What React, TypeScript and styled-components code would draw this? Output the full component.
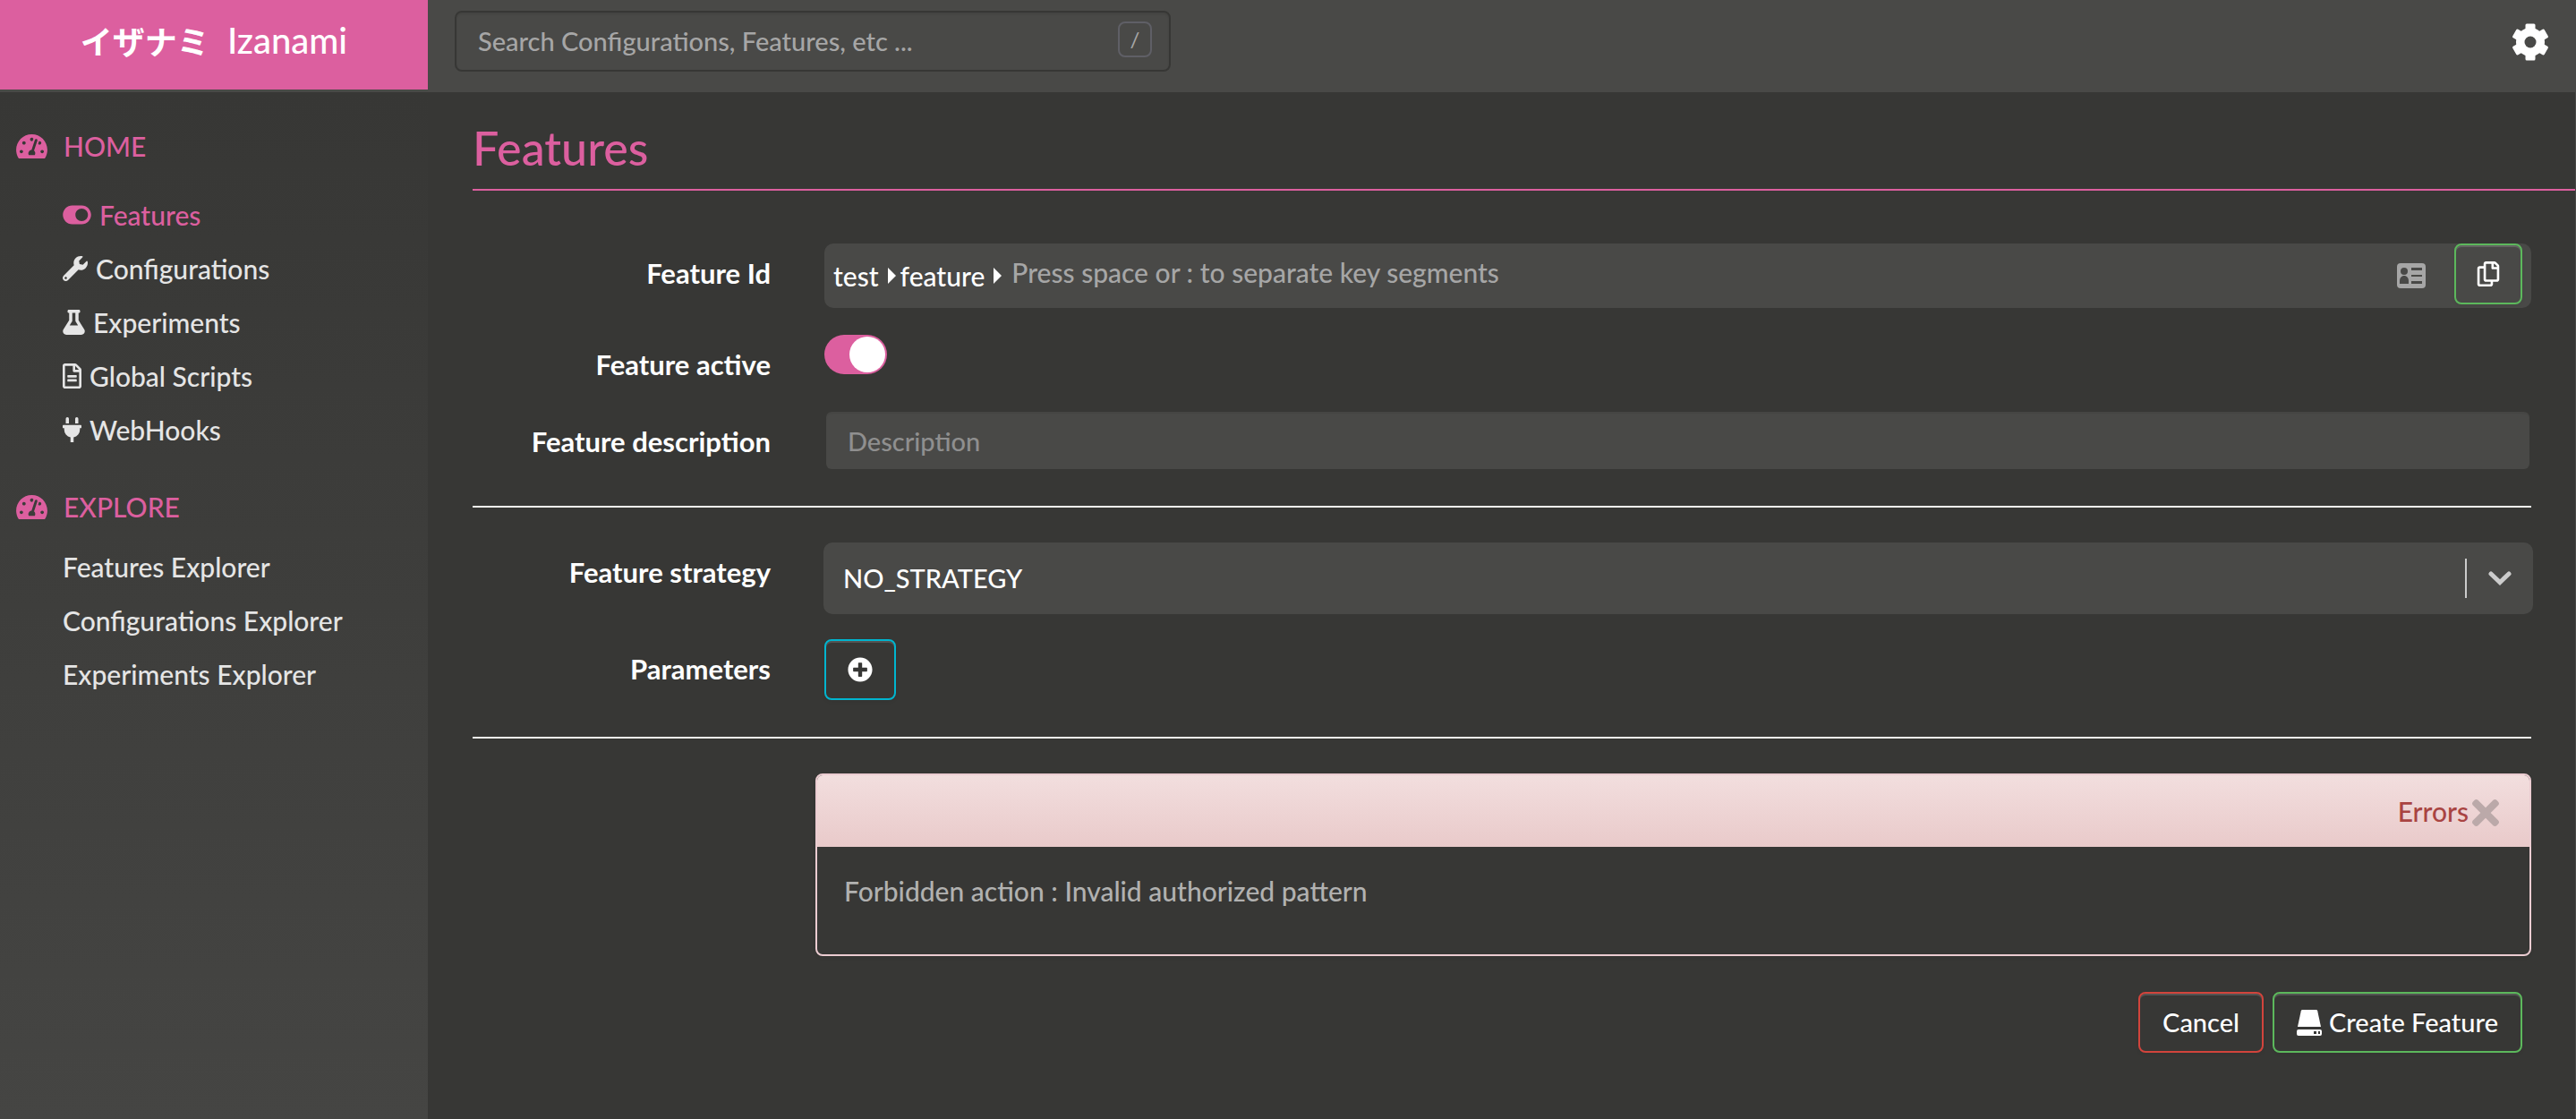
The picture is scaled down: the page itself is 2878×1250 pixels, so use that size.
import React from 'react';
import styled, { createGlobalStyle } from 'styled-components';
import {
  FaFlask,
  FaPlug,
  FaPlusCircle,
  FaRegCopy,
  FaRegFileAlt,
  FaTachometerAlt,
  FaTimes,
  FaToggleOn,
  FaWrench,
} from 'react-icons/fa';

const color = {
  page: '#373735',
  surface: '#494947',
  pink: '#dc5f9f',
  text: '#e5e5e5',
  muted: '#a6a6a6',
  faint: '#8f8f8f',
  green: '#5cb85c',
  red: '#d2443c',
  cyan: '#00b5cf',
  blush: '#ebccd1',
};

const GlobalStyle = createGlobalStyle`
  *, *::before, *::after { box-sizing: border-box; }
  html, body, #root { height: 100%; }
  body {
    margin: 0;
    background: ${color.page};
    color: #fff;
    font: 500 30px/40px Lato, "Noto Sans CJK JP", sans-serif;
  }
  button, input, select { font: inherit; color: inherit; }
  ul { list-style: none; margin: 0; padding: 0; }
`;

const Page = styled.div`
  display: grid;
  grid-template-columns: 478px minmax(0, 1fr);
  grid-template-rows: auto 1fr;
  min-height: 100%;
`;

const Header = styled.header`
  grid-column: 1 / -1;
  display: grid;
  grid-template-columns: subgrid;
  align-items: start;
  height: 103px;
  background: ${color.surface};
`;

const Brand = styled.a`
  display: flex;
  justify-content: center;
  gap: 20px;
  height: 100px;
  padding-top: 21px;
  background: ${color.pink};
  color: #fff;
  font-size: 40px;
  line-height: 48px;
  text-decoration: none;
`;

const Kana = styled.span`
  font-family: "Noto Sans CJK JP", sans-serif;
  font-size: 36px;
  font-weight: 700;
`;

const HeaderBar = styled.div`
  display: flex;
  justify-content: space-between;
  align-items: flex-start;
  padding: 12px 30px 0;
`;

const Search = styled.label`
  display: flex;
  align-items: flex-start;
  width: 800px;
  height: 68px;
  padding: 10px 19px 0 24px;
  border: 2px solid ${color.page};
  border-radius: 8px;
  box-shadow: inset 0 2px 2px rgba(0, 0, 0, 0.08);
`;

const BareInput = styled.input`
  flex: 1;
  min-width: 0;
  padding: 0;
  border: 0;
  outline: 0;
  background: transparent;
  &::placeholder { color: ${color.muted}; opacity: 1; }
`;

const SearchInput = styled(BareInput)`
  height: 42px;
  font-size: 29px;
`;

const Key = styled.kbd`
  width: 38px;
  height: 40px;
  border: 2px solid #5f5f66;
  border-radius: 8px;
  color: ${color.muted};
  font: 400 24px/36px Lato, sans-serif;
  text-align: center;
`;

const GearButton = styled.button`
  display: flex;
  margin-top: 14px;
  padding: 0;
  border: 0;
  background: none;
`;

const Sidebar = styled.nav`
  padding: 38px 18px;
  background: linear-gradient(${color.page}, #454543);
`;

const SectionTitle = styled.h2`
  display: flex;
  align-items: center;
  gap: 18px;
  margin: 0;
  color: ${color.pink};
  font-size: 30px;
  font-weight: 500;
  line-height: 44px;
  svg { width: 35px; height: 31px; }
`;

const Menu = styled.ul<{ $gap: number; $after: number }>`
  padding: ${p => p.$gap}px 0 ${p => p.$after}px 52px;
`;

const MenuLink = styled.a<{ $active?: boolean }>`
  display: flex;
  align-items: center;
  gap: 9px;
  height: 60px;
  color: ${p => (p.$active ? color.pink : color.text)};
  text-decoration: none;
`;

const MenuIcon = styled.span<{ $width: number }>`
  display: flex;
  width: ${p => p.$width}px;
  svg { width: 100%; height: 28px; }
`;

const Main = styled.main`
  padding: 0 0 40px 50px;
  border-right: 1px solid ${color.surface};
`;

const Title = styled.h1`
  margin: 0;
  padding: 32px 0 16px;
  border-bottom: 2px solid ${color.pink};
  color: ${color.pink};
  font-size: 52px;
  font-weight: 500;
  line-height: 60px;
`;

const Form = styled.form`
  margin: 59px 49px 0 0;
`;

const Row = styled.div`
  display: grid;
  grid-template-columns: 333px minmax(0, 1fr);
  column-gap: 60px;
  align-items: start;
`;

const Label = styled.label`
  padding-top: 13px;
  font-size: 31px;
  font-weight: 700;
  text-align: right;
`;

const Divider = styled.hr`
  height: 2px;
  margin: 41px 0 39px;
  border: 0;
  background: #f4f4ee;
`;

const KeyBox = styled.div`
  display: flex;
  align-items: center;
  height: 72px;
  padding: 0 10px;
  border-radius: 10px;
  background: ${color.surface};
`;

const Segment = styled.span`
  display: flex;
  align-items: center;
  gap: 10px;
  margin-right: 5px;
  &::after {
    content: '';
    border: solid transparent;
    border-width: 9px 0 9px 9px;
    border-left-color: #fff;
  }
`;

const SegmentInput = styled(BareInput)`
  margin: 0 32px 8px 6px;
`;

const OutlineButton = styled.button<{ $line: string; $width?: number }>`
  display: flex;
  align-items: center;
  justify-content: center;
  gap: 8px;
  width: ${p => (p.$width ? `${p.$width}px` : 'auto')};
  height: 68px;
  padding: 0 25px;
  border: 2px solid ${p => p.$line};
  border-radius: 8px;
  background: transparent;
  box-shadow: inset 0 2px 0 rgba(255, 255, 255, 0.15), 0 2px 4px rgba(0, 0, 0, 0.05);
  color: #fff;
  font-size: 29px;
  text-shadow: 0 -1px 0 rgba(0, 0, 0, 0.3);
  svg { flex: none; font-size: 28px; }
`;

const CopyWrap = styled.div`
  align-self: flex-start;
  margin-left: 32px;
`;

const Toggle = styled.input`
  appearance: none;
  width: 70px;
  height: 44px;
  margin: 0;
  padding: 2px;
  border-radius: 22px;
  background: #7a7a78;
  &::before {
    content: '';
    display: block;
    width: 40px;
    height: 40px;
    border-radius: 50%;
    background: #fff;
  }
  &:checked { background: ${color.pink}; }
  &:checked::before { margin-left: auto; }
`;

const ToggleRow = styled(Row)`
  margin: 30px 0 33px;
`;

const Description = styled.input`
  height: 64px;
  margin: 0 2px;
  padding: 0 24px;
  border: 0;
  border-radius: 6px;
  background: ${color.surface};
  box-shadow: inset 0 2px 2px rgba(0, 0, 0, 0.06);
  font-size: 29px;
  &::placeholder { color: ${color.faint}; opacity: 1; }
`;

const SelectBox = styled.div`
  display: grid;
  grid-template-columns: minmax(0, 1fr) 2px 74px;
  align-items: center;
  height: 80px;
  margin: 0 -2px 28px -1px;
  border-radius: 10px;
  background: ${color.surface};
`;

const Select = styled.select`
  grid-area: 1 / 1 / 2 / 4;
  height: 100%;
  padding: 0 22px;
  border: 0;
  outline: 0;
  appearance: none;
  background: transparent;
  font-size: 29px;
`;

const SelectBar = styled.span`
  grid-area: 1 / 2;
  height: 44px;
  background: #ccc;
  pointer-events: none;
`;

const SelectArrow = styled.svg`
  grid-area: 1 / 3;
  justify-self: center;
  color: #ccc;
  pointer-events: none;
`;

const Panel = styled.section`
  margin: 0 0 40px 383px;
  border: 2px solid ${color.blush};
  border-radius: 8px;
  box-shadow: 0 2px 4px rgba(0, 0, 0, 0.05);
`;

const PanelHead = styled.header`
  display: flex;
  justify-content: flex-end;
  align-items: center;
  gap: 4px;
  height: 80px;
  padding: 0 34px;
  border-radius: 6px 6px 0 0;
  background: linear-gradient(#f2dede, #e9caca);
  color: #a94442;
`;

const CloseButton = styled.button`
  display: flex;
  padding: 4px 0 0;
  border: 0;
  background: none;
  color: #bba9a9;
  svg { width: 30px; height: 44px; }
`;

const PanelBody = styled.p`
  margin: 0;
  padding: 29px 30px 51px;
  color: #b1b1b0;
`;

const Actions = styled.div`
  display: flex;
  justify-content: flex-end;
  gap: 10px;
  padding-right: 10px;
`;

const Gear = () => (
  <svg width="42" height="42" viewBox="0 0 42 42" fill="#fff" aria-hidden="true">
    <circle cx="21" cy="21" r="16" />
    {[0, 60, 120].map(angle => (
      <rect key={angle} x="15.500" y="0.500" width="11" height="41" rx="1.500" transform={`rotate(${angle} 21 21)`} />
    ))}
    <circle cx="21" cy="21" r="6.500" fill={color.surface} />
  </svg>
);

const IdCard = () => (
  <svg width="32" height="28" viewBox="0 0 32 28" aria-hidden="true">
    <rect width="32" height="28" rx="4" fill={color.muted} />
    <g fill={color.surface}>
      <circle cx="8" cy="9" r="4" />
      <path d="M3 23v-3c0-3.500 2-6 5-6s5 2.500 5 6v3z" />
      <path d="M16 5h12v3H16zM16 13h12v2H16zM16 20h12v3H16z" />
    </g>
  </svg>
);

const Drive = () => (
  <svg width="28" height="30" viewBox="0 0 28 30" fill="currentColor" aria-hidden="true">
    <path d="M6.500 1h15c.8 0 1.500.5 1.700 1.300L27 20H1L4.800 2.300C5 1.500 5.700 1 6.500 1z" />
    <path
      fillRule="evenodd"
      d="M2 23h24a2 2 0 0 1 2 2v3a2 2 0 0 1-2 2H2a2 2 0 0 1-2-2v-3a2 2 0 0 1 2-2zm17 2v3h3v-3zm5 0v3h2v-3z"
    />
  </svg>
);

const homeLinks = [
  { label: 'Features', icon: <FaToggleOn />, width: 32, active: true },
  { label: 'Configurations', icon: <FaWrench />, width: 28 },
  { label: 'Experiments', icon: <FaFlask />, width: 25 },
  { label: 'Global Scripts', icon: <FaRegFileAlt />, width: 21 },
  { label: 'WebHooks', icon: <FaPlug />, width: 21 },
];

const exploreLinks = ['Features Explorer', 'Configurations Explorer', 'Experiments Explorer'];

export default function App() {
  return (
    <>
      <GlobalStyle />
      <Page>
        <Header>
          <Brand href="#home">
            <Kana>イザナミ</Kana>
            <span>Izanami</span>
          </Brand>
          <HeaderBar>
            <Search>
              <SearchInput aria-label="Search" placeholder="Search Configurations, Features, etc ..." />
              <Key>/</Key>
            </Search>
            <GearButton type="button" aria-label="Settings">
              <Gear />
            </GearButton>
          </HeaderBar>
        </Header>

        <Sidebar>
          <SectionTitle><FaTachometerAlt />HOME</SectionTitle>
          <Menu $gap={25} $after={34}>
            {homeLinks.map(link => (
              <li key={link.label}>
                <MenuLink href="#link" $active={link.active}>
                  <MenuIcon $width={link.width}>{link.icon}</MenuIcon>
                  {link.label}
                </MenuLink>
              </li>
            ))}
          </Menu>
          <SectionTitle><FaTachometerAlt />EXPLORE</SectionTitle>
          <Menu $gap={15} $after={0}>
            {exploreLinks.map(label => (
              <li key={label}>
                <MenuLink href="#link">{label}</MenuLink>
              </li>
            ))}
          </Menu>
        </Sidebar>

        <Main>
          <Title>Features</Title>
          <Form onSubmit={e => e.preventDefault()}>
            <Row>
              <Label htmlFor="feature-id">Feature Id</Label>
              <KeyBox>
                <Segment>test</Segment>
                <Segment>feature</Segment>
                <SegmentInput id="feature-id" placeholder="Press space or : to separate key segments" />
                <IdCard />
                <CopyWrap>
                  <OutlineButton type="button" aria-label="Copy" $line={color.green} $width={76}>
                    <FaRegCopy />
                  </OutlineButton>
                </CopyWrap>
              </KeyBox>
            </Row>
            <ToggleRow>
              <Label htmlFor="feature-active">Feature active</Label>
              <Toggle id="feature-active" type="checkbox" defaultChecked />
            </ToggleRow>
            <Row>
              <Label htmlFor="feature-description">Feature description</Label>
              <Description id="feature-description" placeholder="Description" />
            </Row>
            <Divider />
            <Row>
              <Label htmlFor="feature-strategy">Feature strategy</Label>
              <SelectBox>
                <Select id="feature-strategy">
                  <option>NO_STRATEGY</option>
                </Select>
                <SelectBar />
                <SelectArrow width="26" height="16" viewBox="0 0 26 16" aria-hidden="true">
                  <path d="M3 3l10 9.500L23 3" fill="none" stroke="currentColor" strokeWidth="5" strokeLinecap="round" />
                </SelectArrow>
              </SelectBox>
            </Row>
            <Row>
              <Label as="span">Parameters</Label>
              <OutlineButton type="button" aria-label="Add parameter" $line={color.cyan} $width={80}>
                <FaPlusCircle />
              </OutlineButton>
            </Row>
            <Divider />
            <Panel>
              <PanelHead>
                Errors
                <CloseButton type="button" aria-label="Close">
                  <FaTimes />
                </CloseButton>
              </PanelHead>
              <PanelBody>Forbidden action : Invalid authorized pattern</PanelBody>
            </Panel>
            <Actions>
              <OutlineButton type="button" $line={color.red}>Cancel</OutlineButton>
              <OutlineButton type="submit" $line={color.green}>
                <Drive />
                Create Feature
              </OutlineButton>
            </Actions>
          </Form>
        </Main>
      </Page>
    </>
  );
}
